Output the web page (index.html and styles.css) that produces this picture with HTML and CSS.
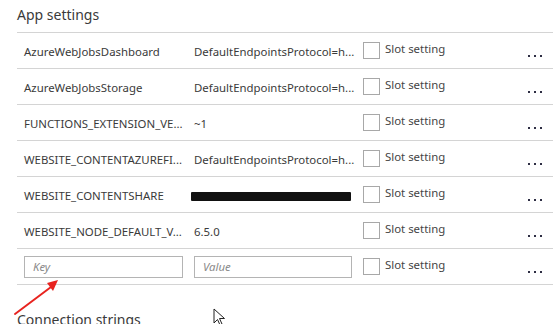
FILE: index.html
```html
<!DOCTYPE html>
<html lang="en">
<head>
    <meta charset="UTF-8">
    <meta name="viewport" content="width=device-width, initial-scale=1.0">
    <title>App settings</title>
    <link rel="stylesheet" href="styles.css">
</head>
<body>
    <div class="settings">
        <h2 class="section-title">App settings</h2>

        <div class="setting-row">
            <div class="key">AzureWebJobsDashboard</div>
            <div class="value">DefaultEndpointsProtocol=h...</div>
            <span class="checkbox"></span>
            <span class="slot">Slot setting</span>
            <span class="more"><i></i><i></i><i></i></span>
        </div>
        <div class="setting-row">
            <div class="key">AzureWebJobsStorage</div>
            <div class="value">DefaultEndpointsProtocol=h...</div>
            <span class="checkbox"></span>
            <span class="slot">Slot setting</span>
            <span class="more"><i></i><i></i><i></i></span>
        </div>
        <div class="setting-row">
            <div class="key">FUNCTIONS_EXTENSION_VE...</div>
            <div class="value">~1</div>
            <span class="checkbox"></span>
            <span class="slot">Slot setting</span>
            <span class="more"><i></i><i></i><i></i></span>
        </div>
        <div class="setting-row">
            <div class="key">WEBSITE_CONTENTAZUREFI...</div>
            <div class="value">DefaultEndpointsProtocol=h...</div>
            <span class="checkbox"></span>
            <span class="slot">Slot setting</span>
            <span class="more"><i></i><i></i><i></i></span>
        </div>
        <div class="setting-row">
            <div class="key">WEBSITE_CONTENTSHARE</div>
            <div class="value"><span class="redacted"></span></div>
            <span class="checkbox"></span>
            <span class="slot">Slot setting</span>
            <span class="more"><i></i><i></i><i></i></span>
        </div>
        <div class="setting-row">
            <div class="key">WEBSITE_NODE_DEFAULT_V...</div>
            <div class="value">6.5.0</div>
            <span class="checkbox"></span>
            <span class="slot">Slot setting</span>
            <span class="more"><i></i><i></i><i></i></span>
        </div>
        <div class="setting-row new-row">
            <input class="field" type="text" placeholder="Key">
            <input class="field" type="text" placeholder="Value">
            <span class="checkbox"></span>
            <span class="slot">Slot setting</span>
            <span class="more"><i></i><i></i><i></i></span>
        </div>

        <h2 class="section-title next">Connection strings</h2>
    </div>

    <!-- Red annotation arrow pointing at the Key box -->
    <svg class="arrow" width="60" height="45" viewBox="0 0 60 45">
        <line x1="2" y1="41" x2="38" y2="14" stroke="#e8231f" stroke-width="2" stroke-linecap="round"/>
        <polygon points="45,7 34,10 40,18" fill="#e8231f"/>
    </svg>

    <!-- Mouse pointer -->
    <svg class="pointer" width="14" height="18" viewBox="0 0 14 18">
        <path d="M1 1 L1 15 L4.5 11.5 L7 17 L9 16 L6.5 10.5 L11.5 10.5 Z" fill="#fff" stroke="#222" stroke-width="1" stroke-linejoin="round"/>
    </svg>
</body>
</html>
```

FILE: styles.css
```css
/* Page base */
html, body {
    margin: 0;
    padding: 0;
    background-color: #fff;
    height: 100%;
    overflow: hidden;
}

body {
    font-family: "Noto Sans", "Open Sans", sans-serif;
    color: #333;
    position: relative;
}

/* Settings block */
.settings {
    margin-left: 17px;
    width: 536px;
}

.section-title {
    font-size: 14px;
    font-weight: normal;
    color: #3a3a3a;
    margin: 0;
    height: 32px;
    line-height: 32px;
    position: relative;
    top: -1px;
}

.section-title.next {
    margin-top: 20px;
}

/* One key/value row */
.setting-row {
    display: grid;
    grid-template-columns: 159px 158px 16px 1fr auto;
    column-gap: 11px;
    align-items: center;
    height: 35px;
    padding: 0 11px 0 7px;
    border-top: 1px solid #d4d4d4;
    font-size: 11.4px;
}

.new-row {
    border-bottom: 1px solid #d4d4d4;
}

.key,
.value {
    white-space: nowrap;
    position: relative;
    top: 1px;
    color: #3a3a3a;
}

.redacted {
    display: inline-block;
    width: 160px;
    height: 9px;
    background-color: #111;
    vertical-align: middle;
    margin-left: -3px;
    border-radius: 1px;
}

/* Checkbox + label */
.checkbox {
    width: 15px;
    height: 15px;
    border: 1px solid #a8a8a8;
    background-color: #fff;
}

.slot {
    margin-left: -5px;
    position: relative;
    top: -2px;
    color: #444;
}

/* Ellipsis menu */
.more {
    display: flex;
    gap: 4px;
    position: relative;
    top: 5px;
}

.more i {
    width: 2px;
    height: 2px;
    background-color: #2e2e44;
}

/* Add-new row inputs */
.field {
    box-sizing: border-box;
    height: 22px;
    border: 1px solid #b4b4b4;
    padding: 0 8px;
    font-family: inherit;
    font-size: 11.4px;
    font-style: italic;
    color: #333;
    outline: none;
}

.field::placeholder {
    color: #8a8a8a;
    font-style: italic;
}

/* Overlays: annotation arrow and mouse pointer */
.arrow {
    position: absolute;
    left: 13px;
    top: 273px;
}

.pointer {
    position: absolute;
    left: 213px;
    top: 308px;
}
```
